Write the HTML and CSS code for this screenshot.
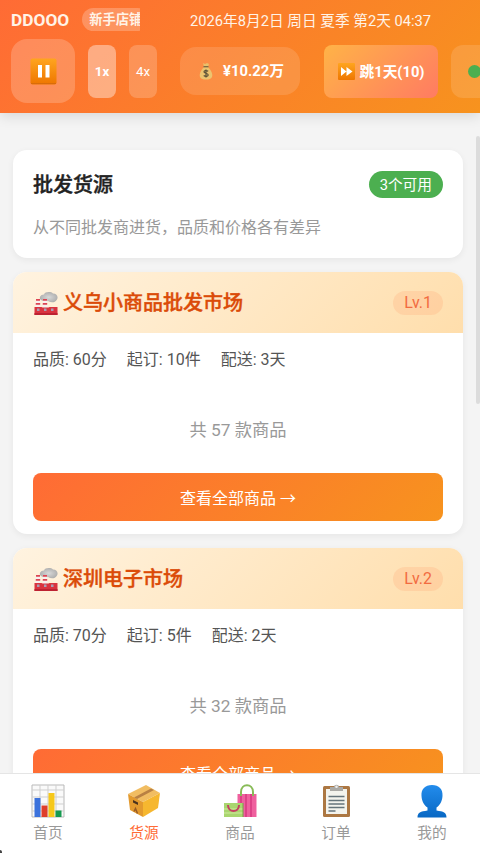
FILE: index.html
```html
<!DOCTYPE html>
<html lang="zh-CN">
<head>
<meta charset="utf-8">
<meta name="viewport" content="width=device-width">
<title>批发货源</title>
<link rel="stylesheet" href="styles.css">
</head>
<body>
<svg class="defs" width="0" height="0">
  <defs>
    <linearGradient id="key" x2="0" y2="1"><stop offset="0" stop-color="#ffa51f"/><stop offset="1" stop-color="#ee7600"/></linearGradient>
    <linearGradient id="blue" x2="0" y2="1"><stop offset="0" stop-color="#238cec"/><stop offset="1" stop-color="#0868c4"/></linearGradient>
    <radialGradient id="smoke"><stop offset="0" stop-color="#d8d8d8"/><stop offset="1" stop-color="#b0b0b0"/></radialGradient>
    <symbol id="factory" viewBox="0 0 24 24">
      <path d="M6 7C5 4 8 2.500 10 2.500c1-3 7-3 9-1 4 0 5.500 3.500 4 6-2 3.500-6 3.500-9 1.500-3 1-6.500 0-8-2z" fill="url(#smoke)"/>
      <path d="M2 7h4l.5 9H1.500zM9 7h4l.5 9H8.500z" fill="#f7f0f0"/>
      <path d="M2 7h4v1.800H2zM1.800 11h4.400v1.800H1.700zM9 7h4v1.800H9zM8.800 11h4.400v1.800H8.700z" fill="#dc4452"/>
      <path d="M.5 15h7l1 .5h6l1-.5h8v8H.5z" fill="#d9333f"/>
      <path d="M.5 21h23v2H.5z" fill="#bd2232"/>
      <path d="M3 16.500h2.500v2.500H3zM10 16.500h2.500v2.500H10zM17 16.500h2.500v2.500H17z" fill="#a99fb5"/>
    </symbol>
  </defs>
</svg>
<div class="app">
  <header class="topbar">
    <div class="status">
      <div class="brand"><b class="logo">DDOOO</b><span class="rank">新手店铺</span></div>
      <span class="date">2026年8月2日 周日 夏季 第2天 04:37</span>
    </div>
    <div class="controls">
      <button class="pause"><svg width="27" height="27" viewBox="0 0 27 27"><rect x=".5" y=".5" width="26" height="26" rx="2" fill="url(#key)"/><path d="M1 25.500h25" stroke="#d96c08"/><path d="M8 7h4v12.500H8zM15.500 7h4v12.500h-4z" fill="#fff"/></svg></button>
      <button class="speed active">1x</button>
      <button class="speed">4x</button>
      <div class="money">
        <svg width="14" height="18" viewBox="0 0 14 18"><path d="M4 1l2 1 2-1 2 1-1 3H5z" fill="#e9c06b"/><path d="M5 5h4c3 3 5 7 4 10-1 2-3 2.500-6 2.500S2 17 1 15C0 12 2 8 5 5z" fill="#ecc46f"/><path d="M4.500 4.700h5" stroke="#7a6844" stroke-width="1.300"/><path d="M9.200 9.200C7 7.900 4.900 8.700 5 10c.1 1.500 4.200 1.100 4.200 3 0 1.600-2.900 1.800-4.500.6M7 7.500v8" fill="none" stroke="#5b5237" stroke-width="1.200"/></svg>
        <b>¥10.22万</b>
      </div>
      <button class="skip"><svg width="17" height="17" viewBox="0 0 17 17"><rect width="17" height="17" rx="1" fill="url(#key)"/><path d="M3 4l5.500 4.500L3 13zM8.500 4l6 4.500-6 4.500z" fill="#fff"/></svg><span>跳1天(10)</span></button>
      <div class="online"><i></i></div>
    </div>
  </header>

  <main class="content">
    <section class="card intro">
      <div class="intro-head"><h1>批发货源</h1><span class="available">3个可用</span></div>
      <p>从不同批发商进货，品质和价格各有差异</p>
    </section>
    <section class="card market">
      <div class="market-head"><svg class="factory"><use href="#factory"/></svg><h2>义乌小商品批发市场</h2><span class="level">Lv.1</span></div>
      <div class="market-body">
        <div class="facts"><span>品质: 60分</span><span>起订: 10件</span><span>配送: 3天</span></div>
        <p class="total">共 57 款商品</p>
        <button class="view-all">查看全部商品 →</button>
      </div>
    </section>
    <section class="card market">
      <div class="market-head"><svg class="factory"><use href="#factory"/></svg><h2>深圳电子市场</h2><span class="level">Lv.2</span></div>
      <div class="market-body">
        <div class="facts"><span>品质: 70分</span><span>起订: 5件</span><span>配送: 2天</span></div>
        <p class="total">共 32 款商品</p>
        <button class="view-all">查看全部商品 →</button>
      </div>
    </section>
    <i class="scroll-thumb"></i>
  </main>

  <nav class="tabs">
    <a><svg viewBox="0 0 34 34"><path d="M1 1h32v32H1z" fill="#fafafa" stroke="#b9b9b9"/><path d="M1 6h32M1 13h32M1 20h32M1 27h32M9 1v32M17 1v32M25 1v32" stroke="#cfcfcf"/><path d="M3.500 14h6v19h-6z" fill="#3b72dc"/><path d="M10.500 21.500h6V33h-6z" fill="#de3e2b"/><path d="M17.500 9h6v24h-6z" fill="#f6c81b"/><path d="M24.500 26.500h6V33h-6z" fill="#169a50"/></svg><span>首页</span></a>
    <a class="current"><svg viewBox="0 0 34 34"><path d="M1 10L19 1l14 8-17 9z" fill="#f1bd62"/><path d="M1 10l15 8v15L3 26z" fill="#e39a2e"/><path d="M16 18L33 9l-2 15-15 9z" fill="#f6b72f"/><path d="M7 13.500L24 4.500l3 1.500-17 9z" fill="#b98143"/><path d="M6 16l5 2.500v2.500L6 18.500z" fill="#4a321d"/><path d="M7 27.500l1.500-3 2 5" fill="none" stroke="#985b25" stroke-width="1.500"/></svg><span>货源</span></a>
    <a><svg viewBox="0 0 34 34"><path d="M14.500 10h19v23h-19z" fill="#ef609e"/><path d="M18 10v23M23 10v23M28 10v23" stroke="#d83880" stroke-width="1.500"/><path d="M18 12V8c0-9 12-9 12 0v4" fill="none" stroke="#88bb57" stroke-width="2"/><path d="M1 19h19v14H1z" fill="#a9d66f"/><path d="M1 25h19M1 29h19" stroke="#c2e48d" stroke-width="1.500"/><path d="M5 21c0 8 11 8 11 0" fill="none" stroke="#c54162" stroke-width="2"/><path d="M20 19v14" stroke="#7b9d4a"/></svg><span>商品</span></a>
    <a><svg viewBox="0 0 34 34"><rect x="4" y="2" width="27" height="31" rx="1.500" fill="#ac7742"/><path d="M7 5h21v25H7z" fill="#f3f3ed"/><path d="M11 3h4c0-3 5-3 5 0h4v4H11z" fill="#aaa9a5"/><circle cx="17.500" cy="2.800" r="1.300" fill="#eee"/><path d="M9.500 12.500h16M9.500 16.500h16M9.500 20h16M9.500 23.500h16M9.500 27h7" stroke="#65747b" stroke-width="1.400"/></svg><span>订单</span></a>
    <a><svg viewBox="0 0 34 34"><path d="M17 1c7 0 11 4 10.500 11-.4 6-3 9.500-6 11.500v3c7 1 10 2 10 7h-29c0-5 3-6 10-7v-3c-3-2-5.600-5.500-6-11.500C6 5 10 1 17 1z" fill="url(#blue)"/></svg><span>我的</span></a>
    <i class="corner"></i>
  </nav>
</div>
</body>
</html>
```

FILE: styles.css
```css
* { box-sizing: border-box; }
body { margin: 0; font-family: Roboto, "Noto Sans CJK SC", sans-serif; }
button { border: 0; padding: 0; font: inherit; color: inherit; }
h1, h2, p { margin: 0; }
svg { display: block; flex: none; }
.defs { position: absolute; }
.app { width: 480px; height: 853px; display: flex; flex-direction: column; overflow: hidden; background: #f4f4f4; }

.topbar { height: 113px; flex: none; padding: 7px 0 0 11px; color: #fff; background: linear-gradient(135deg, #ff6b35, #f7931e); box-shadow: 0 3px 13px rgba(0,0,0,.12); overflow: hidden; z-index: 1; }
.status { display: flex; align-items: center; height: 25px; margin-bottom: 7px; color: #fff3e7; }
.brand { display: flex; align-items: center; gap: 13px; width: 129px; overflow: hidden; margin-right: 50px; }
.logo { font-size: 17.300px; line-height: 24px; }
.rank { flex: none; padding: 0 7px; border-radius: 12px; background: rgba(255,255,255,.23); font-size: 13.300px; line-height: 23px; font-weight: 700; }
.date { font-size: 14.700px; white-space: nowrap; }
.controls { display: flex; align-items: center; height: 64px; }
.pause { width: 64px; height: 64px; flex: none; margin-right: 13px; border-radius: 16px; background: rgba(255,255,255,.2); display: flex; align-items: center; justify-content: center; }
.speed { width: 28px; height: 53px; flex: none; margin-right: 13px; border-radius: 8px; background: rgba(255,255,255,.2); font-size: 13.300px; }
.speed.active { background: rgba(255,255,255,.4); font-weight: 700; }
.money { width: 120px; height: 48px; flex: none; margin: 0 24px 0 10px; border-radius: 16px; background: rgba(255,255,255,.13); display: flex; align-items: center; justify-content: center; gap: 10px; padding-left: 3px; font-size: 14.800px; }
.money b { margin-top: -3px; }
.skip { width: 114px; height: 53px; flex: none; margin-right: 13px; border-radius: 8px; background: linear-gradient(135deg, #ffb347, #ff7b62); display: flex; align-items: center; justify-content: center; gap: 5px; font-size: 14.700px; font-weight: 700; }
.skip span { margin-top: -2px; }
.online { width: 60px; height: 53px; flex: none; padding: 20px 17px; border-radius: 12px; background: rgba(255,255,255,.13); }
.online i { display: block; width: 13px; height: 13px; border-radius: 50%; background: #4caf50; }

.content { flex: 1; min-height: 0; overflow: hidden; position: relative; padding: 37px 17px 0 13px; display: flex; flex-direction: column; gap: 14px; }
.card { flex: none; border-radius: 14px; background: #fff; overflow: hidden; box-shadow: 0 2px 7px rgba(0,0,0,.06); }
.intro { height: 108px; padding: 20px 20px 0; }
.intro-head { display: flex; align-items: center; justify-content: space-between; height: 28px; }
.intro h1 { font-size: 20px; line-height: 28px; font-weight: 500; padding-top: 1px; color: #222; -webkit-text-stroke: .4px currentColor; }
.available { height: 27px; padding: 0 11px; border-radius: 14px; background: #4caf50; color: #fff; font-size: 14.700px; line-height: 28px; }
.intro p { margin-top: 19px; font-size: 16px; line-height: 22px; color: #999; }
.market { height: 262px; }
.market-head { height: 61px; padding: 0 20px 0 21px; display: flex; align-items: center; background: linear-gradient(135deg, #fff3e0, #ffdeac); }
.factory { width: 24px; height: 24px; margin: 3px 5px 0 0; }
.market h2 { flex: 1; font-size: 20px; line-height: 28px; font-weight: 500; padding-top: 1px; color: #db4b08; -webkit-text-stroke: .4px currentColor; }
.level { height: 24px; padding: 0 11px; border-radius: 12px; background: rgba(255,107,53,.12); color: #f26b40; font-size: 16px; line-height: 24px; }
.market-body { padding: 15px 20px 13px; }
.facts { display: flex; gap: 20px; height: 24px; font-size: 16px; line-height: 24px; color: #555; }
.total { margin: 46px 0 31px; text-align: center; font-size: 17.300px; line-height: 24px; color: #999; }
.view-all { display: block; width: 100%; height: 48px; border-radius: 8px; color: #fff; background: linear-gradient(135deg, #ff6b35, #f7931e); font-size: 16px; }
.scroll-thumb { position: absolute; right: 0; top: 23px; width: 4px; height: 268px; border-radius: 3px; background: #dcdcdc; }

.tabs { position: relative; flex: none; height: 80px; display: flex; background: #fff; border-top: 1px solid #e5e5e5; z-index: 1; }
.tabs a { flex: 1; display: flex; flex-direction: column; align-items: center; padding-top: 10px; color: #999; font-size: 14.700px; line-height: 20px; }
.tabs svg { width: 34px; height: 34px; margin-bottom: 5px; }
.tabs .current { color: #ff6b35; }
.corner { position: absolute; left: 0; bottom: 0; width: 2px; height: 3px; background: #444; border-top-right-radius: 2px; }
```
